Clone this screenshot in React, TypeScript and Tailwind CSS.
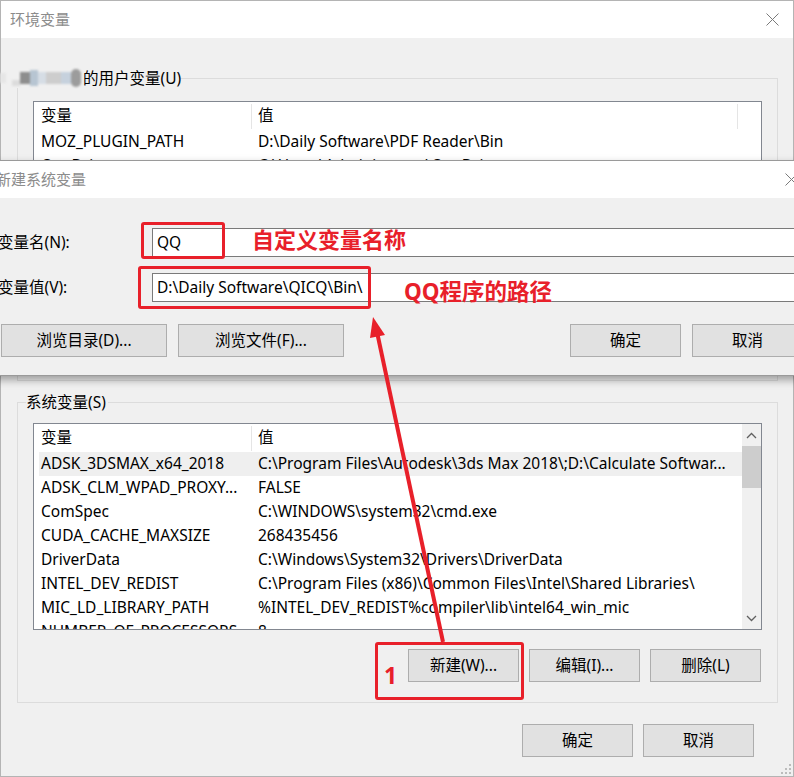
import React from "react";

const FONT = { fontFamily: '"Noto Sans", "Noto Sans CJK SC", sans-serif' };

function WinButton({ label, className = "" }: { label: string; className?: string }) {
  return (
    <div
      className={`h-[33px] w-[111px] shrink-0 bg-[#e1e1e1] border border-[#adadad] flex items-center justify-center text-[15.5px] text-black ${className}`}
    >
      {label}
    </div>
  );
}

function Chevron({ up }: { up?: boolean }) {
  return (
    <svg width="11" height="7" viewBox="0 0 11 7">
      <path
        d={up ? "M1 6 L5.5 1.5 L10 6" : "M1 1 L5.5 5.5 L10 1"}
        fill="none"
        stroke="#606060"
        strokeWidth="1.3"
      />
    </svg>
  );
}

const userRows = [
  ["MOZ_PLUGIN_PATH", "D:\\Daily Software\\PDF Reader\\Bin"],
  ["OneDrive", "C:\\Users\\Administrator\\OneDrive"],
  ["Path", "C:\\Users\\Administrator\\AppData\\Local\\Microsoft\\WindowsApps;"],
  ["TEMP", "C:\\Users\\Administrator\\AppData\\Local\\Temp"],
  ["TMP", "C:\\Users\\Administrator\\AppData\\Local\\Temp"],
];

const sysRows = [
  ["ADSK_3DSMAX_x64_2018", "C:\\Program Files\\Autodesk\\3ds Max 2018\\;D:\\Calculate Softwar..."],
  ["ADSK_CLM_WPAD_PROXY...", "FALSE"],
  ["ComSpec", "C:\\WINDOWS\\system32\\cmd.exe"],
  ["CUDA_CACHE_MAXSIZE", "268435456"],
  ["DriverData", "C:\\Windows\\System32\\Drivers\\DriverData"],
  ["INTEL_DEV_REDIST", "C:\\Program Files (x86)\\Common Files\\Intel\\Shared Libraries\\"],
  ["MIC_LD_LIBRARY_PATH", "%INTEL_DEV_REDIST%compiler\\lib\\intel64_win_mic"],
  ["NUMBER_OF_PROCESSORS", "8"],
];

function ListHeader({ endDivider }: { endDivider?: boolean }) {
  return (
    <div className="flex h-[28px] items-center ml-[5px]">
      <div className="w-[212px] pl-[2px]">变量</div>
      <div className="w-px h-[25px] bg-[#e5e5e5]" />
      <div className="flex-1 pl-[6px]">值</div>
      {endDivider && <div className="w-px h-[25px] bg-[#e5e5e5] mr-[23px]" />}
    </div>
  );
}

function ListRow({ name, value, selected }: { name: string; value: string; selected?: boolean }) {
  return (
    <div className={`flex h-[24px] items-center ml-[5px] whitespace-nowrap overflow-hidden ${selected ? "bg-[#efefef]" : ""}`}>
      <div className="w-[212px] pl-[2px] overflow-hidden">{name}</div>
      <div className="flex-1 pl-[7px] overflow-hidden">{value}</div>
    </div>
  );
}

export default function App() {
  return (
    <div className="relative w-[794px] h-[777px] overflow-hidden bg-white text-[15.5px] text-black" style={FONT}>
      {/* main window */}
      <div className="flex flex-col h-full border border-[#b4b4b4] bg-[#f0f0f0]">
        <div className="h-[37px] bg-white flex items-center justify-between pl-[9px] pr-[14px]">
          <span className="text-[#8c8c8c] text-[15px]">环境变量</span>
          <svg width="13" height="13" viewBox="0 0 13 13">
            <path d="M0.5 0.5 L12.5 12.5 M12.5 0.5 L0.5 12.5" stroke="#7a7a7a" strokeWidth="1" />
          </svg>
        </div>

        <div className="pl-[16px] pr-[15px] pt-[30px] flex flex-col">
          {/* user variables */}
          <fieldset className="border border-[#dcdcdc] px-[15px] pb-[20px]">
            <legend className="ml-[-33px] h-[20px] leading-[20px] flex items-center">
              <span className="flex items-center h-[28px] blur-[1px] mr-[2px]">
                <span className="w-[6px] h-[10px] bg-[#e6e6e6]" />
                <span className="w-[8px] h-[6px] bg-[#dcdcdc] mt-[10px] ml-[6px]" />
                <span className="w-[10px] h-[12px] bg-[#8e8e8e]" />
                <span className="w-[8px] h-[16px] bg-[#b7c5d2]" />
                <span className="w-[8px] h-[12px] bg-[#d6dde5]" />
                <span className="w-[15px] h-[12px] bg-[#cdcdcd]" />
                <span className="w-[10px] h-[12px] bg-[#c6d1dd]" />
                <span className="w-[10px] h-[18px] bg-[#9c9c9c] rounded-full" />
              </span>
              <span>的用户变量(U)</span>
            </legend>
            <div className="mt-[13px] h-[259px] bg-white border border-[#828790] overflow-hidden">
              <ListHeader endDivider />
              {userRows.map(([n, v]) => (
                <ListRow key={n} name={n} value={v} />
              ))}
            </div>
          </fieldset>

          {/* system variables */}
          <fieldset className="mt-[11px] border border-[#dcdcdc] px-[15px] pb-[20px]">
            <legend className="ml-[-7px] h-[20px] leading-[20px] pr-[2px]">系统变量(S)</legend>
            <div className="mt-[11px] h-[207px] bg-white border border-[#828790] flex overflow-hidden">
              <div className="flex-1 overflow-hidden">
                <ListHeader />
                {sysRows.map(([n, v], i) => (
                  <ListRow key={n} name={n} value={v} selected={i === 0} />
                ))}
              </div>
              <div className="w-[19px] bg-[#f0f0f0] flex flex-col items-center">
                <div className="h-[22px] flex items-center justify-center">
                  <Chevron up />
                </div>
                <div className="w-full h-[42px] bg-[#cdcdcd]" />
                <div className="flex-1" />
                <div className="h-[22px] flex items-center justify-center">
                  <Chevron />
                </div>
              </div>
            </div>
            <div className="mt-[19px] flex justify-end gap-[10px] mr-[1px]">
              <WinButton label="新建(W)..." />
              <WinButton label="编辑(I)..." />
              <WinButton label="删除(L)" />
            </div>
          </fieldset>

          <div className="mt-[21px] flex justify-end gap-[10px] pr-[24px]">
            <WinButton label="确定" />
            <WinButton label="取消" />
          </div>
        </div>
      </div>

      {/* resize grip */}
      <svg className="absolute right-[2px] bottom-[2px]" width="12" height="12" viewBox="0 0 12 12">
        {[
          [9, 1],
          [9, 5],
          [5, 5],
          [9, 9],
          [5, 9],
          [1, 9],
        ].map(([x, y]) => (
          <rect key={`${x}-${y}`} x={x} y={y} width="2" height="2" fill="#bcbcbc" />
        ))}
      </svg>

      {/* new system variable dialog */}
      <div className="absolute top-[160px] left-[-12px] w-[824px] border border-[#9a9a9a] shadow-[0_4px_8px_rgba(0,0,0,0.35)]">
        <div className="h-[37px] bg-white flex items-center justify-between pl-[7px] pr-[13px]">
          <span className="text-[#8c8c8c] text-[15px]">新建系统变量</span>
          <svg width="13" height="13" viewBox="0 0 13 13">
            <path d="M0.5 0.5 L12.5 12.5 M12.5 0.5 L0.5 12.5" stroke="#7a7a7a" strokeWidth="1" />
          </svg>
        </div>
        <div className="h-[177px] bg-[#f0f0f0] pl-[9px] pr-[8px] pt-[30px]">
          <div className="flex items-center">
            <div className="w-[154px]">变量名(N):</div>
            <div className="flex-1 h-[29px] bg-white border border-[#7a7a7a] flex items-center pl-[4px]">QQ</div>
          </div>
          <div className="flex items-center mt-[16px]">
            <div className="w-[154px]">变量值(V):</div>
            <div className="flex-1 h-[29px] bg-white border border-[#7a7a7a] flex items-center pl-[4px]">
              D:\Daily Software\QICQ\Bin\
            </div>
          </div>
          <div className="flex items-center mt-[22px] ml-[3px]">
            <WinButton label="浏览目录(D)..." className="w-[166px]" />
            <WinButton label="浏览文件(F)..." className="w-[166px] ml-[11px]" />
            <div className="flex-1" />
            <WinButton label="确定" />
            <WinButton label="取消" className="ml-[11px]" />
          </div>
        </div>
      </div>

      {/* red annotations */}
      <div className="absolute left-[141px] top-[222px] w-[84px] h-[37px] border-[3px] border-[#e8202a] rounded-[3px]" />
      <div className="absolute left-[138px] top-[266px] w-[233px] h-[43px] border-[3px] border-[#e8202a] rounded-[3px]" />
      <div className="absolute left-[375px] top-[642px] w-[149px] h-[58px] border-[3px] border-[#e8202a] rounded-[3px]" />
      <div className="absolute left-[252px] top-[225px] text-[22px] font-bold leading-[28px] text-[#e8202a]">自定义变量名称</div>
      <div className="absolute left-[404px] top-[278px] text-[22.5px] font-bold leading-[28px] text-[#e8202a]">QQ程序的路径</div>
      <div className="absolute left-[384px] top-[661px] text-[23px] font-bold leading-[28px] text-[#e8202a]">1</div>
      <svg className="absolute left-0 top-0 pointer-events-none" width="794" height="777">
        <line x1="443" y1="642" x2="377" y2="332" stroke="#e8202a" strokeWidth="4" />
        <polygon points="373,317 385,335 370,338" fill="#e8202a" />
      </svg>
    </div>
  );
}
